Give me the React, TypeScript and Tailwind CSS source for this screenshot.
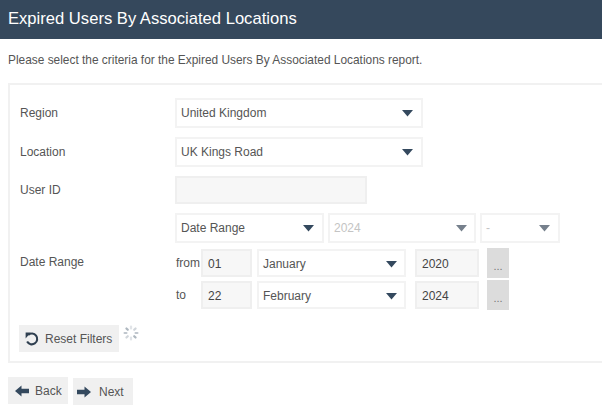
function Caret({ faded }: { faded?: boolean }) {
  return (
    <svg width="11" height="8" viewBox="0 0 11 8" className="shrink-0">
      <path d="M0 1h11L5.5 7.5z" fill={faded ? "#76808c" : "#34495e"} />
    </svg>
  );
}

function Select({ value, className, faded }: { value: string; className: string; faded?: boolean }) {
  return (
    <div
      className={`flex items-center justify-between border-2 border-[#f3f3f3] bg-white pl-[4px] text-[12px] ${
        faded ? "text-[#c4c4c4]" : "text-[#555]"
      } ${className}`}
    >
      <span>{value}</span>
      <Caret faded={faded} />
    </div>
  );
}

function Field({ value, className }: { value: string; className: string }) {
  return (
    <div className={`flex items-center border-2 border-[#efefef] bg-[#f7f7f7] pl-[5px] text-[12px] text-[#444] ${className}`}>
      {value}
    </div>
  );
}

function DateRow({ label, day, month, year }: { label: string; day: string; month: string; year: string }) {
  return (
    <div className="flex h-[30px] items-center">
      <span className="w-[26px] pl-px text-[12px] text-[#555]">{label}</span>
      <Field value={day} className="h-[28px] w-[51px] pt-px" />
      <Select value={month} className="ml-[5px] h-[28px] w-[149px] pr-[7px] pt-px" />
      <Field value={year} className="ml-[9px] h-[28px] w-[64px] pt-px" />
      <button className="ml-[8px] flex h-[30px] w-[22px] items-end justify-center bg-[#dcdcdc] pb-[6px] text-[11px] leading-none text-[#777]">
        ...
      </button>
    </div>
  );
}

function Spinner() {
  const ticks = [0, 45, 90, 135, 180, 225, 270, 315];
  return (
    <svg width="16" height="16" viewBox="0 0 16 16" className="ml-1">
      {ticks.map((a, i) => (
        <rect
          key={a}
          x="6.9"
          y="0.5"
          width="2.2"
          height="4"
          rx="1"
          fill="#aab3bc"
          opacity={0.35 + (i % 4) * 0.2}
          transform={`rotate(${a} 8 8)`}
        />
      ))}
    </svg>
  );
}

function BlockArrow({ flip }: { flip?: boolean }) {
  return (
    <svg width="14" height="12" viewBox="0 0 14 12" className={flip ? "shrink-0 -scale-x-100" : "shrink-0"}>
      <path d="M0 3.8h7.5V0.5L14 6l-6.5 5.5V8.2H0z" fill="#34495e" />
    </svg>
  );
}

function ResetIcon() {
  return (
    <svg width="14" height="14" viewBox="0 0 14 14" className="shrink-0">
      <path d="M3.2 2.9A5.4 5.4 0 1 1 2.1 9.6" fill="none" stroke="#2f3f50" strokeWidth="2.1" />
      <path d="M0.6 0.6h5.2L0.6 6.4z" fill="#2f3f50" />
    </svg>
  );
}

export default function App() {
  return (
    <div className="h-[418px] w-[602px] overflow-hidden bg-white font-['Liberation_Sans',Arial,sans-serif]">
      <div className="flex h-[39px] items-center bg-[#35485c] pb-px pl-2 text-[16.6px] text-white">
        Expired Users By Associated Locations
      </div>

      <p className="mt-[14px] pl-2 text-[11.9px] leading-[14px] text-[#555]">
        Please select the criteria for the Expired Users By Associated Locations report.
      </p>

      <div className="ml-2 mt-[16px] h-[280px] w-[600px] border-y-2 border-l-2 border-[#f1f1f1] pl-[10px] pt-[13px]">
        <div className="flex h-[30px] items-center">
          <span className="w-[155px] text-[12px] text-[#555]">Region</span>
          <Select value="United Kingdom" className="h-[30px] w-[248px] pr-[8px]" />
        </div>
        <div className="mt-[9px] flex h-[30px] items-center">
          <span className="w-[155px] text-[12px] text-[#555]">Location</span>
          <Select value="UK Kings Road" className="h-[30px] w-[248px] pr-[8px]" />
        </div>
        <div className="mt-[9px] flex h-[28px] items-center">
          <span className="w-[155px] text-[12px] text-[#555]">User ID</span>
          <Field value="" className="h-[28px] w-[192px]" />
        </div>

        <div className="mt-[9px] flex items-center">
          <span className="w-[155px] text-[12px] text-[#555]">Date Range</span>
          <div className="flex flex-col">
            <div className="flex h-[30px] items-center">
              <Select value="Date Range" className="h-[30px] w-[149px] pr-[8px]" />
              <Select value="2024" faded className="ml-[4px] h-[30px] w-[148px] pr-[7px]" />
              <Select value="-" faded className="ml-[4px] h-[30px] w-[80px] pr-[8px]" />
            </div>
            <div className="mt-[5px] flex flex-col gap-[2px]">
              <DateRow label="from" day="01" month="January" year="2020" />
              <DateRow label="to" day="22" month="February" year="2024" />
            </div>
          </div>
        </div>

        <div className="-ml-px mt-[15px] flex items-start">
          <button className="flex h-[27px] w-[100px] items-center gap-[6px] bg-[#f0f0f0] pl-[6px] text-[12px] text-[#555]">
            <ResetIcon />
            Reset Filters
          </button>
          <Spinner />
        </div>
      </div>

      <div className="ml-2 mt-[14px] flex items-start gap-[5px]">
        <button className="flex h-[27px] w-[60px] items-center gap-[6px] bg-[#f0f0f0] pl-[7px] text-[12px] text-[#555]">
          <BlockArrow flip />
          Back
        </button>
        <button className="mt-px flex h-[27px] w-[60px] items-center gap-[8px] bg-[#f0f0f0] pl-[4px] text-[12px] text-[#555]">
          <BlockArrow />
          Next
        </button>
      </div>
    </div>
  );
}
